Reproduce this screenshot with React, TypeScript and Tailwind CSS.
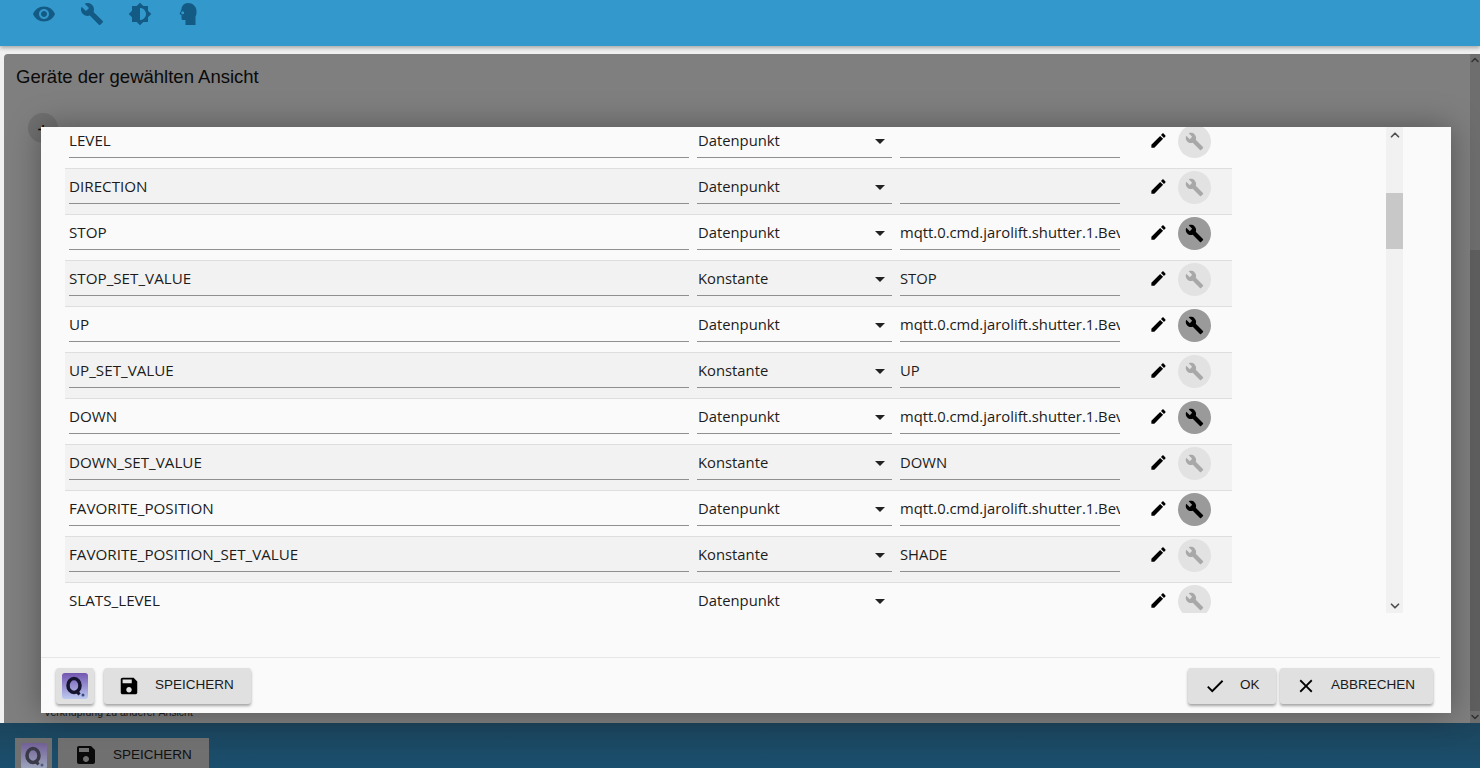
import { ChevronDown, ChevronUp } from "lucide-react"
import type { ReactNode } from "react"

const icons = {
  eye: "M12 4.5C7 4.5 2.73 7.61 1 12c1.73 4.39 6 7.5 11 7.5s9.27-3.11 11-7.5c-1.73-4.39-6-7.5-11-7.5zM12 17c-2.76 0-5-2.24-5-5s2.24-5 5-5 5 2.24 5 5-2.24 5-5 5zm0-8c-1.66 0-3 1.34-3 3s1.34 3 3 3 3-1.34 3-3-1.34-3-3-3z",
  wrench:
    "M22.7 19l-9.1-9.1c.9-2.3.4-5-1.5-6.9-2-2-5-2.4-7.4-1.3L9 6 6 9 1.6 4.7C.4 7.1.9 10.1 2.9 12.1c1.9 1.9 4.6 2.4 6.9 1.5l9.1 9.1c.4.4 1 .4 1.4 0l2.3-2.3c.5-.4.5-1.1.1-1.4z",
  brightness:
    "M20 15.31L23.31 12 20 8.69V4h-4.69L12 .69 8.69 4H4v4.69L.69 12 4 15.31V20h4.69L12 23.31 15.31 20H20v-4.69zM12 18V6c3.31 0 6 2.69 6 6s-2.69 6-6 6z",
  head: "M12 1C8 1 5.5 4 5.5 7.5L3.5 12 5.5 13v3.5c0 1 .8 1.5 1.5 1.5h2.5v5h10v-8.5c1-1.5 1-3.5 1-5.5C20.500 4.500 16.500 1 12 1zM6.700 9.200a1.500 1.500 0 1 0 0 3 1.500 1.500 0 0 0 0-3z",
  pencil:
    "M3 17.25V21h3.75L17.81 9.94l-3.75-3.75L3 17.25zM20.71 7.04c.39-.39.39-1.02 0-1.41l-2.34-2.34c-.39-.39-1.02-.39-1.41 0l-1.83 1.83 3.75 3.75 1.83-1.83z",
  save: "M17 3H5c-1.11 0-2 .9-2 2v14c0 1.1.89 2 2 2h14c1.1 0 2-.9 2-2V7l-4-4zm-5 16c-1.66 0-3-1.34-3-3s1.34-3 3-3 3 1.34 3 3-1.34 3-3 3zm3-10H5V5h10v4z",
  check: "M9 16.17L4.83 12l-1.42 1.41L9 19 21 7l-1.41-1.41z",
  close:
    "M19 6.41L17.59 5 12 10.59 6.41 5 5 6.41 10.59 12 5 17.59 6.41 19 12 13.41 17.59 19 19 17.59 13.41 12z",
}

const Icon = ({ name, className }: { name: keyof typeof icons; className?: string }) => (
  <svg viewBox="0 0 24 24" fill="currentColor" fillRule="evenodd" className={className}>
    <path d={icons[name]} />
  </svg>
)

const QLogo = ({ className }: { className?: string }) => (
  <div
    className={`flex items-center justify-center rounded-[3px] bg-gradient-to-b from-[#7455b0] to-[#bccbf0] ${className}`}
  >
    <svg viewBox="0 0 26 26" className="h-full w-full">
      <ellipse cx="12" cy="12.500" rx="6" ry="7" fill="none" stroke="#15152f" strokeWidth="3.500" />
      <path d="M14.500 18l3 3.500" stroke="#15152f" strokeWidth="3" />
      <circle cx="21" cy="22" r="1.500" fill="#3a4a80" />
    </svg>
  </div>
)

const rows = [
  { name: "LEVEL", type: "Datenpunkt", value: "", active: false },
  { name: "DIRECTION", type: "Datenpunkt", value: "", active: false },
  { name: "STOP", type: "Datenpunkt", value: "mqtt.0.cmd.jarolift.shutter.1.Bev", active: true },
  { name: "STOP_SET_VALUE", type: "Konstante", value: "STOP", active: false },
  { name: "UP", type: "Datenpunkt", value: "mqtt.0.cmd.jarolift.shutter.1.Bev", active: true },
  { name: "UP_SET_VALUE", type: "Konstante", value: "UP", active: false },
  { name: "DOWN", type: "Datenpunkt", value: "mqtt.0.cmd.jarolift.shutter.1.Bev", active: true },
  { name: "DOWN_SET_VALUE", type: "Konstante", value: "DOWN", active: false },
  { name: "FAVORITE_POSITION", type: "Datenpunkt", value: "mqtt.0.cmd.jarolift.shutter.1.Bev", active: true },
  { name: "FAVORITE_POSITION_SET_VALUE", type: "Konstante", value: "SHADE", active: false },
  { name: "SLATS_LEVEL", type: "Datenpunkt", value: "", active: false },
]

const Field = ({ className, children }: { className: string; children?: ReactNode }) => (
  <div className={`flex h-[34px] items-center overflow-hidden border-b border-[#8f8f8f] whitespace-nowrap ${className}`}>
    {children}
  </div>
)

const Row = ({ row, odd }: { row: (typeof rows)[number]; odd: boolean }) => (
  <div
    className={`flex h-[46px] w-[1167px] shrink-0 items-start border-b border-[#dedede] pt-[1px] text-[#1c1c1c] ${odd ? "bg-[#f2f2f2]" : ""}`}
  >
    <Field className="ml-[4px] w-[620px] text-[15.200px]">{row.name}</Field>
    <Field className="relative ml-[8px] w-[195px] pl-px text-[14.800px]">
      {row.type}
      <span className="absolute top-[15px] right-[7px] h-0 w-0 border-x-[5px] border-t-[5px] border-x-transparent border-t-[#222]" />
    </Field>
    <Field className="ml-[8px] w-[220px] text-[14.800px]">{row.value}</Field>
    <div className="ml-[29px] flex h-[34px] items-center">
      <Icon name="pencil" className="-mt-[2px] h-[19px] w-[19px] text-black" />
      <div
        className={`ml-[10px] flex h-[33px] w-[33px] items-center justify-center rounded-full ${row.active ? "bg-[#9a9a9a] text-black" : "bg-[#e2e2e2] text-[#a8a8a8]"}`}
      >
        <Icon name="wrench" className="h-[19px] w-[19px]" />
      </div>
    </div>
  </div>
)

const DialogButton = ({ icon, label, className }: { icon: keyof typeof icons; label: string; className: string }) => (
  <div
    className={`flex h-[36px] items-center rounded-[3px] bg-[#e0e0e0] text-[13.5px] text-[#1a1a1a] shadow-[0_2px_3px_rgba(0,0,0,0.35)] ${className}`}
  >
    <Icon name={icon} className="h-[22px] w-[22px] text-black" />
    <span className="-mt-[1px]">{label}</span>
  </div>
)

export default function App() {
  return (
    <div className="relative flex h-[768px] w-[1480px] flex-col overflow-hidden bg-[#f0f0f0] font-['Liberation_Sans',sans-serif]">
      <header className="flex h-[46px] shrink-0 items-start gap-[24px] bg-[#3399cc] pt-[2px] pl-[32px] text-[#135a85] shadow-[0_2px_4px_rgba(0,0,0,0.3)]">
        <Icon name="eye" className="h-[24px] w-[24px]" />
        <Icon name="wrench" className="h-[24px] w-[24px]" />
        <Icon name="brightness" className="h-[24px] w-[24px]" />
        <Icon name="head" className="h-[24px] w-[24px]" />
      </header>

      <main className="mt-[8px] ml-[4px] flex h-[669px] w-[1476px] flex-col rounded-t-[4px] bg-[#7f7f7f]">
        <div className="pt-[12px] pl-[12px] text-[18.500px] leading-[22px] text-[#0a0a0a]">Geräte der gewählten Ansicht</div>
        <div className="mt-[25px] ml-[24px] flex h-[30px] w-[30px] items-center justify-center rounded-full bg-[#707070] pt-[3px] text-[20px] leading-none text-black">
          +
        </div>
        <div className="mt-auto mb-[5px] ml-[40px] text-[10.500px] leading-[12px] text-[#1a1a1a]">Verknüpfung zu anderer Ansicht</div>
      </main>

      <footer className="flex h-[45px] shrink-0 items-start gap-[6px] bg-gradient-to-b from-[#1c445c] to-[#1a4f6e] pt-[15px] pl-[15px]">
        <div className="flex h-[38px] w-[37px] items-start justify-center bg-[#707070] pt-[5px]">
          <QLogo className="h-[26px] w-[26px] opacity-60" />
        </div>
        <div className="flex h-[38px] w-[151px] items-center bg-[#707070] pb-[4px] pl-[16px] text-[13.500px] text-[#0f0f0f]">
          <Icon name="save" className="h-[24px] w-[24px] text-[#0a0a0a]" />
          <span className="ml-[15px]">SPEICHERN</span>
        </div>
      </footer>

      <div className="absolute top-[54px] right-0 bottom-[45px] flex w-[10px] flex-col items-center bg-[#6e6e6e]">
        <ChevronUp className="h-[12px] w-[12px] shrink-0 text-[#333]" strokeWidth={3} />
        <div className="mt-[184px] w-full flex-1 bg-[#5f5f5f]" />
        <ChevronDown className="h-[12px] w-[12px] shrink-0 text-[#333]" strokeWidth={3} />
      </div>

      <div className="absolute top-[127px] left-[41px] flex h-[586px] w-[1410px] flex-col bg-[#fafafa] shadow-[0_0_30px_rgba(0,0,0,0.35)]">
        <div className="flex h-[486px] shrink-0 font-['Open_Sans',sans-serif]">
          <div className="ml-[24px] flex w-[1321px] flex-col overflow-hidden">
            <div className="-mt-[4px] flex flex-col">
              {rows.map((row, i) => (
                <Row key={row.name} row={row} odd={i % 2 === 1} />
              ))}
            </div>
          </div>
          <div className="flex w-[17px] shrink-0 flex-col items-center bg-[#f1f1f1]">
            <ChevronUp className="mt-px h-[14px] w-[14px] text-[#505050]" strokeWidth={3} />
            <div className="mt-[51px] h-[56px] w-full bg-[#c8c8c8]" />
            <ChevronDown className="mt-auto h-[14px] w-[14px] text-[#505050]" strokeWidth={3} />
          </div>
        </div>
        <div className="mt-[44px] mr-[11px] flex h-[56px] items-start border-t border-[#e6e6e6] pt-[10px]">
          <div className="ml-[15px] flex h-[36px] w-[38px] items-center justify-center rounded-[3px] bg-[#e0e0e0] shadow-[0_2px_3px_rgba(0,0,0,0.35)]">
            <QLogo className="h-[26px] w-[26px]" />
          </div>
          <DialogButton icon="save" label="SPEICHERN" className="ml-[10px] w-[147px] gap-[15px] pl-[14px]" />
          <DialogButton icon="check" label="OK" className="ml-auto w-[88px] gap-[14px] pl-[16px]" />
          <DialogButton icon="close" label="ABBRECHEN" className="mr-[7px] ml-[4px] w-[153px] gap-[14px] pl-[15px]" />
        </div>
      </div>
    </div>
  )
}
